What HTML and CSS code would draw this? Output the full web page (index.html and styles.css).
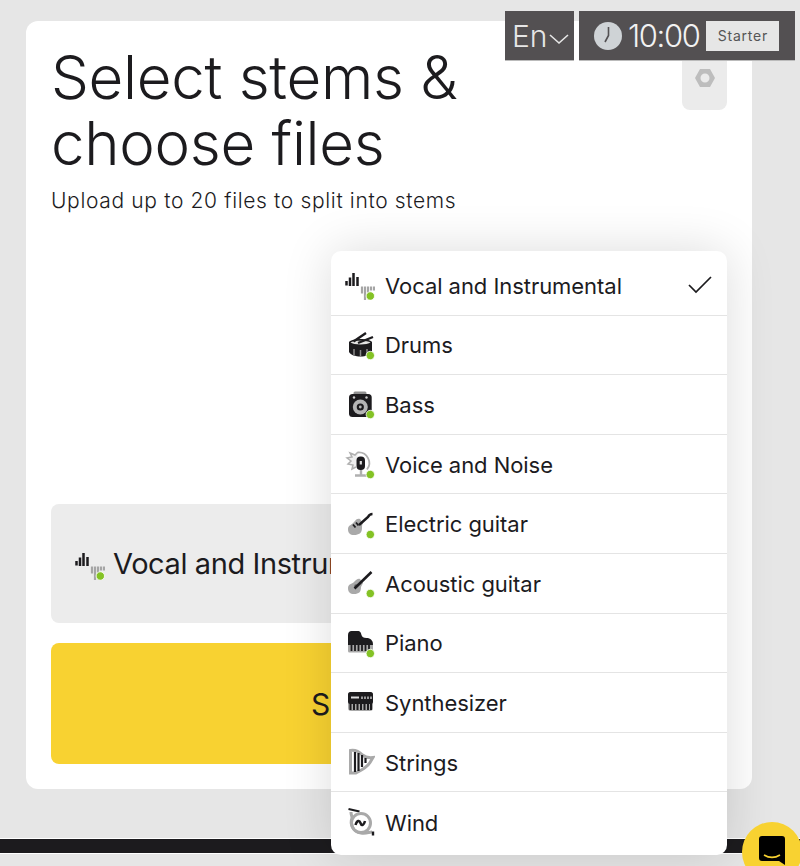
FILE: index.html
```
<!DOCTYPE html>
<html lang="en">
<head>
<meta charset="utf-8">
<title>Select stems</title>
<link rel="stylesheet" href="styles.css">
</head>
<body>
<div class="page">
  <main class="card">
    <header class="card-head">
      <div>
        <h1 class="title">Select stems &amp;<br>choose files</h1>
        <p class="subtitle">Upload up to 20 files to split into stems</p>
      </div>
      <button class="settings" aria-label="Settings">
        <svg width="22" height="22" viewBox="0 0 22 22"><path fill-rule="evenodd" fill="#bdbdbd" d="M6 2h10l5 9-5 9H6l-5-9zM11 6.500a4.500 4.500 0 1 0 0 9 4.500 4.500 0 0 0 0-9z"/></svg>
      </button>
    </header>
    <div class="select-box">
      <svg class="icon" viewBox="0 0 30 30"><use href="#i-vocal"/><circle class="dot" cx="25.300" cy="26" r="4.200"/></svg>
      <span class="select-text">Vocal and Instrumental</span>
    </div>
    <button class="primary"><span class="primary-label">Select files</span></button>
  </main>
  <div class="footer-bar"></div>

  <div class="topbar">
    <div class="lang">En<svg width="22" height="12" viewBox="0 0 22 12"><path d="M2 2l9 8 9-8" fill="none" stroke="#e6e6e6" stroke-width="1.600"/></svg></div>
    <div class="timer">
      <svg width="28" height="28" viewBox="0 0 28 28"><circle cx="14" cy="14" r="14" fill="#cfd3d6"/><path d="M14.500 5v8.500l-3.500 6.500" fill="none" stroke="#535052" stroke-width="1.600"/></svg>
      <span class="time">10:00</span>
      <span class="plan">Starter</span>
    </div>
  </div>

  <ul class="menu">
    <li class="item"><svg class="icon" viewBox="0 0 30 30"><use href="#i-vocal"/><circle class="dot" cx="25.300" cy="26" r="4.200"/></svg><span class="label">Vocal and Instrumental</span><svg class="check" width="26" height="20" viewBox="0 0 26 20"><path d="M2 10l7 7L24 2" fill="none" stroke="#1c1b1e" stroke-width="1.700"/></svg></li>
    <li class="item"><svg class="icon" viewBox="0 0 30 30"><path fill="#1c1b1e" d="M4 12c3-4 20-4 23 0v10c-3 6-20 6-23 0z"/><path d="M5.500 12.500c3-2.500 17-2.500 20 0-3 2.500-17 2.500-20 0z" fill="#e4e4e4"/><path d="M8.500 11.500L21 3M13 13L28 7" stroke="#1c1b1e" stroke-width="2.400"/><path d="M9 19v6M15.500 20v7M22 19v6" stroke="#8a8a8a" stroke-width="1.500"/><circle class="dot" cx="25.300" cy="25.500" r="4.200"/></svg><span class="label">Drums</span></li>
    <li class="item"><svg class="icon" viewBox="0 0 30 30"><rect x="8.500" y="2.500" width="13" height="5" rx="1.500" fill="#8f8f8f"/><rect x="4" y="5" width="22.700" height="23" rx="3.500" fill="#1c1b1e"/><circle cx="15.300" cy="18" r="7.500" fill="#b5b5b5"/><circle cx="15.300" cy="18" r="3.600" fill="#1c1b1e"/><circle cx="15.300" cy="18" r="1.400" fill="#b5b5b5"/><circle cx="9" cy="8.500" r="1.200" fill="#ccc"/><circle cx="21.500" cy="8.500" r="1.200" fill="#ccc"/><circle class="dot" cx="25.300" cy="25.500" r="4.200"/></svg><span class="label">Bass</span></li>
    <li class="item"><svg class="icon" viewBox="0 0 30 30"><path d="M13 3.500a10.500 10.500 0 0 1 9 17" fill="none" stroke="#b0b0b0" stroke-width="1.800"/><path d="M13 3L10 6 5 4l2 4-5 1 4 3-3 3 5 1-1 4 4-2" fill="#eee" stroke="#b0b0b0" stroke-width="1.500"/><rect x="11.500" y="7.500" width="8.500" height="13.500" rx="4" fill="#1c1b1e"/><rect x="14.700" y="12" width="2.200" height="3.500" fill="#ddd"/><path d="M16 21v4.500M10 26.500h12" stroke="#b0b0b0" stroke-width="2.400"/><circle class="dot" cx="25.300" cy="25.500" r="4.200"/></svg><span class="label">Voice and Noise</span></li>
    <li class="item"><svg class="icon" viewBox="0 0 30 30"><path fill="#a9a9a9" d="M3 20c0-4 4-4 6-7s4-4 6-3l3 4c-1 2-1 3-1 5 0 5-3 7-8 7-4 0-6-2-6-6z"/><path d="M14 16l9-8c1-2 3-3 4.500-3" fill="none" stroke="#1c1b1e" stroke-width="2.500"/><path d="M8 15.500l2.500 3M11 13.500l2.500 3" stroke="#1c1b1e" stroke-width="1.800"/><circle class="dot" cx="25.300" cy="25.500" r="4.200"/></svg><span class="label">Electric guitar</span></li>
    <li class="item"><svg class="icon" viewBox="0 0 30 30"><path fill="#a9a9a9" d="M3 20c0-4 4-4 6-6s4-4 6-3l3 4c-1 2-1 2-2 4 0 5-2 7-7 7-4 0-6-2-6-6z"/><circle cx="11" cy="18" r="1.800" fill="#666"/><path d="M9.500 20.500L26.500 4" stroke="#1c1b1e" stroke-width="2.600"/><circle class="dot" cx="25.300" cy="25.500" r="4.200"/></svg><span class="label">Acoustic guitar</span></li>
    <li class="item"><svg class="icon" viewBox="0 0 30 30"><rect x="3" y="13" width="25" height="11.500" rx="1.500" fill="#a9a9a9"/><path fill="#1c1b1e" d="M3 7c0-2.500 1.500-4 3.500-4h6c3 0 3.500 2 4 4 .5 2 2 3 5 3 4 0 6.500 2.500 6.500 7H3z"/><path d="M6.500 17v6M10 17v6M13.500 17v6M17 17v6M20.500 17v6M24 17v6" stroke="#1c1b1e" stroke-width="1.800"/><circle class="dot" cx="25.300" cy="25.500" r="4.200"/></svg><span class="label">Piano</span></li>
    <li class="item"><svg class="icon" viewBox="0 0 30 30"><rect x="3" y="5" width="25" height="19" rx="3" fill="#a9a9a9"/><rect x="3" y="5" width="25" height="12" rx="2.500" fill="#1c1b1e"/><path d="M5.500 16v7M9 16v7M12.500 16v7M16 16v7M19.500 16v7M23 16v7M26 16v7" stroke="#1c1b1e" stroke-width="2"/><path d="M6 10.500h8" stroke="#ddd" stroke-width="2"/><path d="M17 9.500v2.500M20 9.500v2.500M23 9.500v2.500M26 9.500v2.500" stroke="#ddd" stroke-width="1.300"/></svg><span class="label">Synthesizer</span></li>
    <li class="item"><svg class="icon" viewBox="0 0 30 30"><path fill="none" stroke="#a9a9a9" stroke-width="3" d="M5.500 3.500c6-1 9 1.500 12 4.500 3 2.500 6 3 10.500 2.500l-3 5c-3 5-9 8-14 10.500H5.500z"/><path d="M10 5v20M13.500 6v18M17 8v12M20.500 11v5" stroke="#1c1b1e" stroke-width="2.200"/></svg><span class="label">Strings</span></li>
    <li class="item"><svg class="icon" viewBox="0 0 30 30"><path d="M3.500 2l11 2.500" stroke="#1c1b1e" stroke-width="2"/><path fill="none" stroke="#a9a9a9" stroke-width="3" d="M6 5c0 3 1 4 1 6-2 5 0 14 9 15 5 1 8-1 11-1"/><circle cx="16" cy="16" r="9.500" fill="none" stroke="#a9a9a9" stroke-width="3"/><path d="M10.500 18c1.500-5 4-5 5-2s3 3 4.500-2" fill="none" stroke="#1c1b1e" stroke-width="2.500"/><path d="M28 24.500v4" stroke="#1c1b1e" stroke-width="2.400"/></svg><span class="label">Wind</span></li>
  </ul>

  <button class="chat" aria-label="Chat">
    <svg width="26" height="29" viewBox="0 0 26 29"><path fill="#000" d="M3 0h20a3 3 0 0 1 3 3v26l-6-4H3a3 3 0 0 1-3-3V3a3 3 0 0 1 3-3z"/><path d="M5 19c5 3 11 3 16 0" fill="none" stroke="#f8d231" stroke-width="1.600"/></svg>
  </button>
</div>

<svg class="defs" width="0" height="0" aria-hidden="true">
  <defs>
    <g id="i-vocal">
      <path d="M1.500 11v4.500M5 7.500V16M8.500 3v13M12.500 7v9" stroke="#1c1b1e" stroke-width="2.500" fill="none"/>
      <path d="M17 16.500v7M20 16.500V30M23 16.500v6M26 16.500v4M29 16.500v4" stroke="#a5a5a5" stroke-width="2.200" fill="none"/>
    </g>
  </defs>
</svg>
</body>
</html>
```
FILE: styles.css
```
* { box-sizing: border-box; }
html, body { margin: 0; padding: 0; height: 100%; }
body {
  background: #e6e6e6;
  color: #1c1b1e;
  font-family: "Inter", "Liberation Sans", sans-serif;
  overflow: hidden;
}
.page { position: relative; width: 800px; height: 866px; padding-top: 21px; overflow: hidden; }
.defs { position: absolute; }
.card {
  margin: 0 48px 0 26px;
  height: 768px;
  background: #fff;
  border-radius: 12px;
  padding: 23px 25px 25px;
  display: flex;
  flex-direction: column;
}
.card-head { display: flex; justify-content: space-between; align-items: flex-start; height: 460px; }
.title { margin: 0; font-size: 60px; line-height: 66px; font-weight: 300; letter-spacing: -0.300px; }
.subtitle { margin: 10px 0 0; font-size: 21px; line-height: 30px; font-weight: 300; letter-spacing: 0.650px; }
.settings {
  width: 45px; height: 66px; margin-top: 0;
  background: #ebebeb; border: 0; border-radius: 0 0 8px 8px;
  display: flex; align-items: flex-end; justify-content: center; padding: 0 0 21px;
}
.select-box {
  height: 119px; background: #ececec; border-radius: 8px;
  display: flex; align-items: center; padding: 0 24px; gap: 8px;
}
.select-box .icon { margin-top: 2px; }
.select-text { font-size: 29px; letter-spacing: -0.400px; white-space: nowrap; }
.primary {
  margin-top: 20px; height: 121px; border: 0; border-radius: 8px;
  background: #f8d231; font: inherit; font-size: 30px; color: #1c1b1e;
}
.primary-label { display: block; padding-top: 1px; }
.footer-bar { margin-top: 49px; height: 16px; background: #1c1b1e; border-top: 1px solid #fff; border-bottom: 1px solid #fff; }
.topbar { position: absolute; top: 11px; left: 505px; display: flex; gap: 5px; height: 50px; }
.lang, .timer { background: #535052; border-bottom: 1px solid #bbb; display: flex; align-items: center; color: #e6e6e6; }
.lang { width: 69px; padding-left: 7px; font-size: 30px; font-weight: 300; }
.lang svg { margin-top: 6px; }
.timer { width: 216px; padding-left: 15px; }
.time { margin-left: 6px; font-size: 31px; font-weight: 300; letter-spacing: -1.400px; color: #f2f2f2; }
.plan {
  margin-left: 7px; width: 73px; height: 30px; background: #e6e6e6; color: #555;
  font-size: 14px; letter-spacing: 0.800px; display: flex; align-items: center; justify-content: center;
}
.menu {
  position: absolute; left: 331px; top: 251px; width: 396px; height: 604px; margin: 0;
  padding: 5px 0 3px; list-style: none; background: #fff; border-radius: 10px;
  box-shadow: 0 0 50px rgba(0, 0, 0, 0.14);
}
.item {
  height: 59.600px; display: flex; align-items: center; padding: 0 14px; gap: 10px;
  font-size: 22px; letter-spacing: -0.050px; border-bottom: 1px solid #e4e4e4;
}
.item:last-child { border-bottom: 0; }
.label { padding-top: 1px; }
.icon { width: 30px; height: 30px; flex: none; }
.dot { fill: #84c225; stroke: #fff; stroke-width: 0.800; }
.check { margin-left: auto; }
.chat {
  position: absolute; left: 742px; top: 822px; width: 60px; height: 60px; padding: 14px 0 0;
  background: #f8d231; border: 0; border-radius: 50%;
  display: flex; justify-content: center; align-items: flex-start;
}
```
